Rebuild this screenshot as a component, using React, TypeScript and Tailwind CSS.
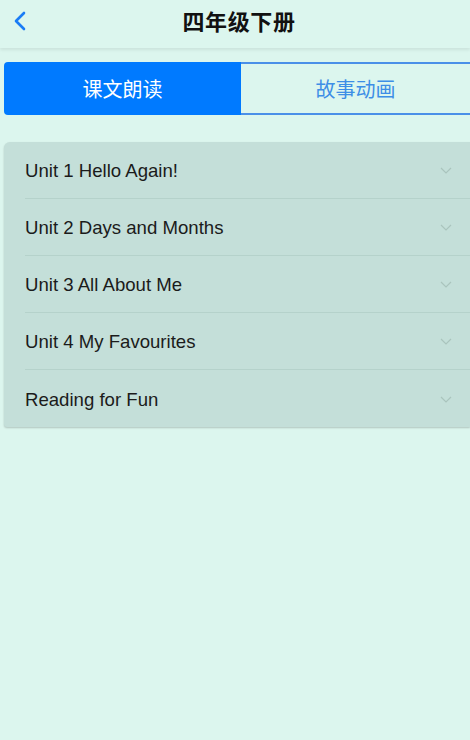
import React from "react";

const units = [
  "Unit 1 Hello Again!",
  "Unit 2 Days and Months",
  "Unit 3 All About Me",
  "Unit 4 My Favourites",
  "Reading for Fun",
];

export default function App() {
  return (
    <div
      className="w-[470px] h-[740px] bg-[#dcf6ee] overflow-hidden flex flex-col"
      style={{ fontFamily: '"Liberation Sans", "Noto Sans CJK SC", sans-serif' }}
    >
      <div className="h-[48px] relative flex items-center justify-center pb-[8px] shadow-[0_2px_3px_rgba(0,0,0,0.08)] bg-[#dcf6ee] z-10">
        <svg className="absolute left-[12px] top-[11px]" width="16" height="20" viewBox="0 0 16 20">
          <path d="M12 2 L4 10 L12 18" fill="none" stroke="#1a7cf5" strokeWidth="2.6" strokeLinecap="round" strokeLinejoin="round" />
        </svg>
        <span className="text-[22px] font-semibold text-[#111] tracking-[0.6px] ml-[8px]" style={{ fontFamily: '"Noto Sans CJK SC", sans-serif' }}>
          四年级下册
        </span>
      </div>
      <div className="pt-[14px] pl-[4px]">
        <div className="flex h-[53px]">
          <div className="w-[237px] bg-[#007aff] rounded-l-[4px] flex items-center justify-center text-white text-[20px]" style={{ fontFamily: '"Noto Sans CJK SC", sans-serif' }}>
            课文朗读
          </div>
          <div className="flex-1 border-y-2 border-[#4a90e8] flex items-center justify-center text-[#3d8ee6] text-[20px]" style={{ fontFamily: '"Noto Sans CJK SC", sans-serif' }}>
            故事动画
          </div>
        </div>
      </div>
      <div className="pt-[27px] pl-[4px]">
        <div className="bg-[#c4dfd9] rounded-tl-[6px] rounded-bl-[3px] shadow-[0_1px_2px_rgba(0,0,0,0.2)]">
          {units.map((u, i) => (
            <div key={u} className="pl-[21px]">
              <div className={`h-[57px] flex items-center justify-between pr-[18px] pt-[2px] ${i < units.length - 1 ? "border-b border-[#b5d2cb]" : ""}`}>
                <span className="text-[18.6px] text-[#1b1b1b]">{u}</span>
                <svg width="12" height="8" viewBox="0 0 12 8">
                  <path d="M1 1 L6 6 L11 1" fill="none" stroke="#aac4bd" strokeWidth="1.2" />
                </svg>
              </div>
            </div>
          ))}
        </div>
      </div>
    </div>
  );
}
